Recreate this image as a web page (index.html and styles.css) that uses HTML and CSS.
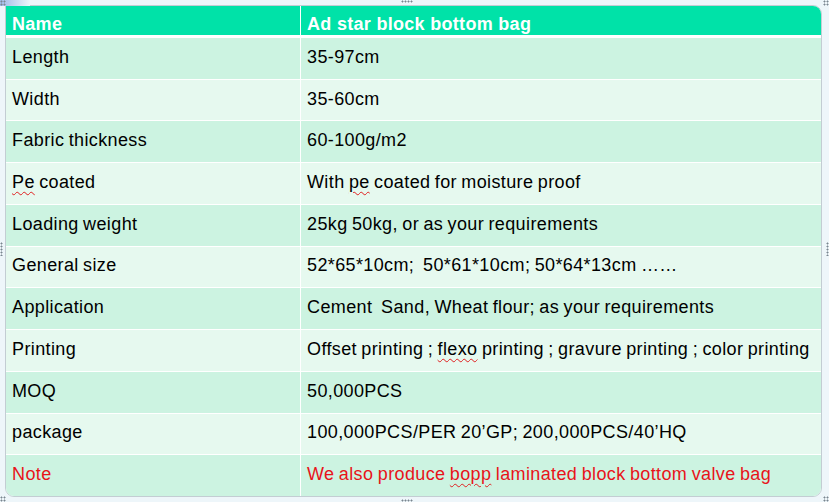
FILE: index.html
```html
<!DOCTYPE html>
<html>
<head>
<meta charset="utf-8">
<link rel="stylesheet" href="styles.css">
</head>
<body>
<div class="stage">
  <div class="corner-glow"></div>
  <div class="frame">
    <div class="table">
      <div class="cell head"><span>Name</span></div>
      <div class="cell head"><span>Ad star block bottom bag</span></div>

      <div class="cell odd"><span>Length</span></div>
      <div class="cell odd"><span>35-97cm</span></div>

      <div class="cell even"><span>Width</span></div>
      <div class="cell even"><span>35-60cm</span></div>

      <div class="cell odd"><span>Fabric thickness</span></div>
      <div class="cell odd"><span>60-100g/m2</span></div>

      <div class="cell even"><span><span class="spell">Pe</span> coated</span></div>
      <div class="cell even"><span>With <span class="spell">pe</span> coated for moisture proof</span></div>

      <div class="cell odd"><span>Loading weight</span></div>
      <div class="cell odd"><span>25kg 50kg, or as your requirements</span></div>

      <div class="cell even"><span>General size</span></div>
      <div class="cell even"><span>52*65*10cm;&nbsp; 50*61*10cm; 50*64*13cm ……</span></div>

      <div class="cell odd"><span>Application</span></div>
      <div class="cell odd"><span>Cement&nbsp; Sand, Wheat flour; as your requirements</span></div>

      <div class="cell even"><span>Printing</span></div>
      <div class="cell even"><span>Offset printing ; <span class="spell">flexo</span> printing ; gravure printing ; color printing</span></div>

      <div class="cell odd"><span>MOQ</span></div>
      <div class="cell odd"><span>50,000PCS</span></div>

      <div class="cell even"><span>package</span></div>
      <div class="cell even"><span>100,000PCS/PER 20’GP; 200,000PCS/40’HQ</span></div>

      <div class="cell odd note"><span>Note</span></div>
      <div class="cell odd note"><span>We also produce <span class="spell">bopp</span> laminated block bottom valve bag</span></div>
    </div>
  </div>
  <div class="handle h-tl"></div>
  <div class="handle h-tc"></div>
  <div class="handle h-tr"></div>
  <div class="handle h-ml"></div>
  <div class="handle h-mr"></div>
  <div class="handle h-bl"></div>
  <div class="handle h-bc"></div>
  <div class="handle h-br"></div>
</div>
</body>
</html>
```

FILE: styles.css
```css
html, body {
  margin: 0;
  padding: 0;
}

body {
  width: 829px;
  height: 502px;
  background: #eef6fa;
  font-family: "Liberation Sans", Arial, sans-serif;
  overflow: hidden;
}

.stage {
  position: relative;
  width: 829px;
  height: 502px;
}

.corner-glow {
  position: absolute;
  left: 0;
  top: 0;
  width: 30px;
  height: 6px;
  background: linear-gradient(90deg, #9fb8e6, #eef6fa);
}

.frame {
  padding: 5px 7px 5px 5px;
}

.table {
  width: 817px;
  height: 492px;
  box-sizing: border-box;
  border: 1px solid #c3cdd3;
  border-radius: 0 9px 9px 9px;
  overflow: hidden;
  background: #ffffff;
  display: grid;
  grid-template-columns: 294px 1fr;
  grid-template-rows: 31px repeat(11, 1fr);
  column-gap: 1px;
  row-gap: 1px;
}

.cell {
  display: flex;
  align-items: center;
  padding: 0 0 2px 6px;
  font-size: 18px;
  letter-spacing: 0.38px;
  word-spacing: -1px;
  color: #000000;
  white-space: nowrap;
}

.head {
  background: #00e2a8;
  color: #ffffff;
  font-weight: bold;
  letter-spacing: 0.3px;
  word-spacing: 0;
  align-items: flex-end;
  padding-bottom: 0;
  border-bottom: 2px solid #ffffff;
  box-sizing: border-box;
  line-height: 22px;
}

.odd {
  background: #ccf3e1;
}

.even {
  background: #e6f9ef;
}

.note {
  color: #e8141a;
}

.spell {
  text-decoration: underline wavy #e02020;
  text-decoration-thickness: 1px;
  text-underline-offset: 3px;
}

.handle {
  position: absolute;
  width: 5px;
  height: 5px;
  background:
    radial-gradient(circle, #7a8690 0.8px, transparent 1.2px) 0 0 / 3px 3px;
}

.h-tl { left: 0; top: 0; width: 6px; height: 6px; }
.h-tc { left: 401px; top: 0; width: 12px; height: 3px; }
.h-tr { right: 0; top: 0; width: 6px; height: 6px; }
.h-ml { left: 0; top: 242px; width: 3px; height: 14px; }
.h-mr { right: 0; top: 242px; width: 3px; height: 14px; }
.h-bl { left: 0; bottom: 0; width: 6px; height: 6px; }
.h-bc { left: 401px; bottom: 0; width: 12px; height: 3px; }
.h-br { right: 0; bottom: 0; width: 6px; height: 6px; }
```
